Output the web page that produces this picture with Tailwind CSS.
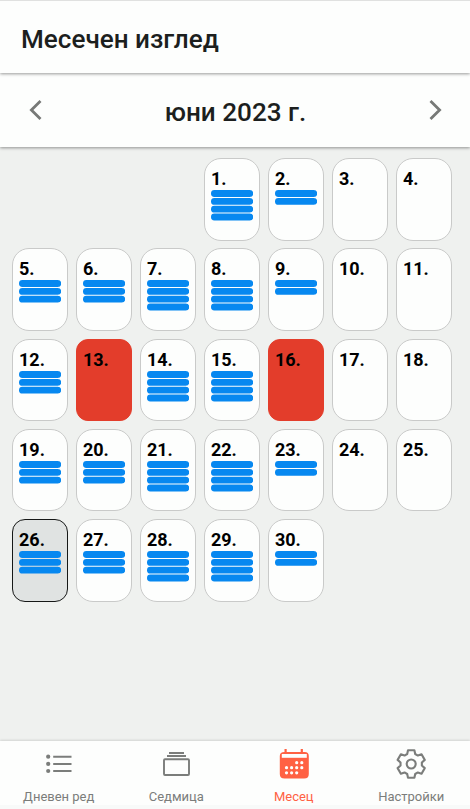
<!DOCTYPE html>
<html lang="bg">
<head>
<meta charset="utf-8">
<title>Месечен изглед</title>
<script src="https://cdn.jsdelivr.net/npm/@tailwindcss/browser@4"></script>
</head>
<body class="w-[470px] h-[809px] overflow-hidden bg-[#eff1ef] font-[Roboto,sans-serif] flex flex-col text-[#1c1f1e]">
<header class="relative z-20 h-[73px] shrink-0 bg-[#fdfefd] border-t border-[#e0e1e0] shadow-[0_1px_3px_rgba(0,0,0,0.4)] flex items-center pl-[21px] pt-[4px]">
  <h1 class="text-[26.1px] leading-8 font-medium whitespace-nowrap">Месечен изглед</h1>
</header>
<div class="relative z-10 h-[74px] shrink-0 bg-[#fdfefd] shadow-[0_1px_3px_rgba(0,0,0,0.4)] flex items-center justify-between pl-[29px] pr-[28px]">
  <svg class="w-[13px] h-[20px]" viewBox="0 0 13 20" fill="none" stroke="#777977" stroke-width="2.8"><path d="M11.5 1 2.4 10l9.1 9"/></svg>
  <h2 class="text-[26.1px] leading-8 font-medium whitespace-nowrap pt-[4px]">юни 2023 г.</h2>
  <svg class="w-[13px] h-[20px]" viewBox="0 0 13 20" fill="none" stroke="#777977" stroke-width="2.8"><path d="M1.500 1l9.100 9-9.100 9"/></svg>
</div>
<main id="month" class="flex-1 pt-[11.2px] pl-[11.7px] grid grid-cols-[repeat(7,56.3px)] auto-rows-[82.6px] gap-x-[7.7px] gap-y-[7.6px] content-start"></main>
<nav class="relative h-[68px] shrink-0 bg-[#fdfefd] shadow-[0_-1px_2px_rgba(0,0,0,0.12)] border-b-4 border-[#f8faf9] grid grid-cols-4 text-[13px] leading-4 text-[#7b7d7b]">
  <a class="flex flex-col items-center pt-[7px] gap-[9px]">
    <svg class="w-8 h-8" viewBox="0 0 32 32" fill="#7b7d7b"><circle cx="5.2" cy="8.7" r="2.1"/><circle cx="5.2" cy="15.9" r="2.1"/><circle cx="5.2" cy="23" r="2.1"/><path d="M10.2 7.7h18.3v2H10.2zM10.2 14.9h18.3v2H10.2zM10.2 22h18.3v2H10.2z"/></svg>
    <span>Дневен ред</span>
  </a>
  <a class="flex flex-col items-center pt-[7px] gap-[9px]">
    <svg class="w-8 h-8" viewBox="0 0 32 32" fill="#7b7d7b"><path d="M9 4h15v2H9zM7 7h19v2H7z"/><rect x="4" y="11.2" width="25" height="15.8" rx="1" fill="none" stroke="#7b7d7b" stroke-width="1.9"/></svg>
    <span>Седмица</span>
  </a>
  <a class="flex flex-col items-center pt-[7px] gap-[9px] text-[#ff6143]">
    <svg class="w-8 h-8" viewBox="0.5 0 32 32"><path fill="#ff6143" d="M7 1h2.200v3h14V1h2.200v3h1.800q4.100 0 4.100 4v18q0 4.600-4.600 4.600H7Q2.300 30.600 2.300 26V8q0-4 4.700-4z"/><path fill="#fdfefd" d="M4.300 6h25v3.800h-25z"/><g fill="#fdfefd"><circle cx="19.200" cy="14.700" r="1.600"/><circle cx="24.300" cy="14.700" r="1.600"/><circle cx="9" cy="19.700" r="1.600"/><circle cx="14.100" cy="19.700" r="1.600"/><circle cx="19.200" cy="19.700" r="1.600"/><circle cx="24.300" cy="19.700" r="1.600"/><circle cx="9" cy="24.800" r="1.600"/><circle cx="14.100" cy="24.800" r="1.600"/><circle cx="19.200" cy="24.800" r="1.600"/></g></svg>
    <span>Месец</span>
  </a>
  <a class="flex flex-col items-center pt-[7px] gap-[9px]">
    <svg class="w-8 h-8" viewBox="-16.200 -16 32 32" fill="none" stroke="#7b7d7b" stroke-width="2.100" stroke-linejoin="round"><path d="M-3.200-13.800 3.200-13.800 4-10 6.660-8.460 10.350-9.670 13.550-4.130 10.660-1.540 10.660 1.540 13.550 4.130 10.350 9.670 6.660 8.460 4 10 3.200 13.800-3.200 13.800-4 10-6.660 8.460-10.350 9.670-13.550 4.130-10.660 1.540-10.660-1.540-13.550-4.130-10.350-9.670-6.660-8.460-4-10z"/><circle r="4.500"/></svg>
    <span>Настройки</span>
  </a>
</nav>
<script>
// Number of entries for each day, starting on Thursday the 1st
const entries = [4,2,0,0, 3,3,4,4,2,0,0, 3,0,4,4,0,0,0, 3,3,4,4,2,0,0, 3,3,4,4,2];
const normal = 'rounded-[17px] border pt-[11px] px-[6.3px] flex flex-col bg-[#fdfefd] border-[#c9cac9]';
const off = 'rounded-[12px] border pt-[11px] px-[6.3px] flex flex-col bg-[#e33d2b] border-[#e33d2b]';
const today = 'rounded-[13px] border pt-[11px] px-[6.3px] flex flex-col bg-[#e0e3e2] border-[#161817]';
document.getElementById('month').innerHTML = entries.map((n, i) => {
  const d = i + 1;
  const look = d === 26 ? today : (d === 13 || d === 16) ? off : normal;
  const start = d === 1 ? ' col-start-4' : '';
  let bars = '';
  for (let k = 0; k < n; k++) bars += `<rect y="${(k * 7.8 + 0.1).toFixed(1)}" width="42.2" height="6.9" rx="3.4"/>`;
  return `<div class="${look}${start}"><b class="text-[18px] leading-[18px] font-bold text-black">${d}.</b><svg class="mt-[2px] w-[42.2px] h-[32px] shrink-0" viewBox="0 0 42.2 32" fill="#0788f0">${bars}</svg></div>`;
}).join('');
</script>
</body>
</html>
